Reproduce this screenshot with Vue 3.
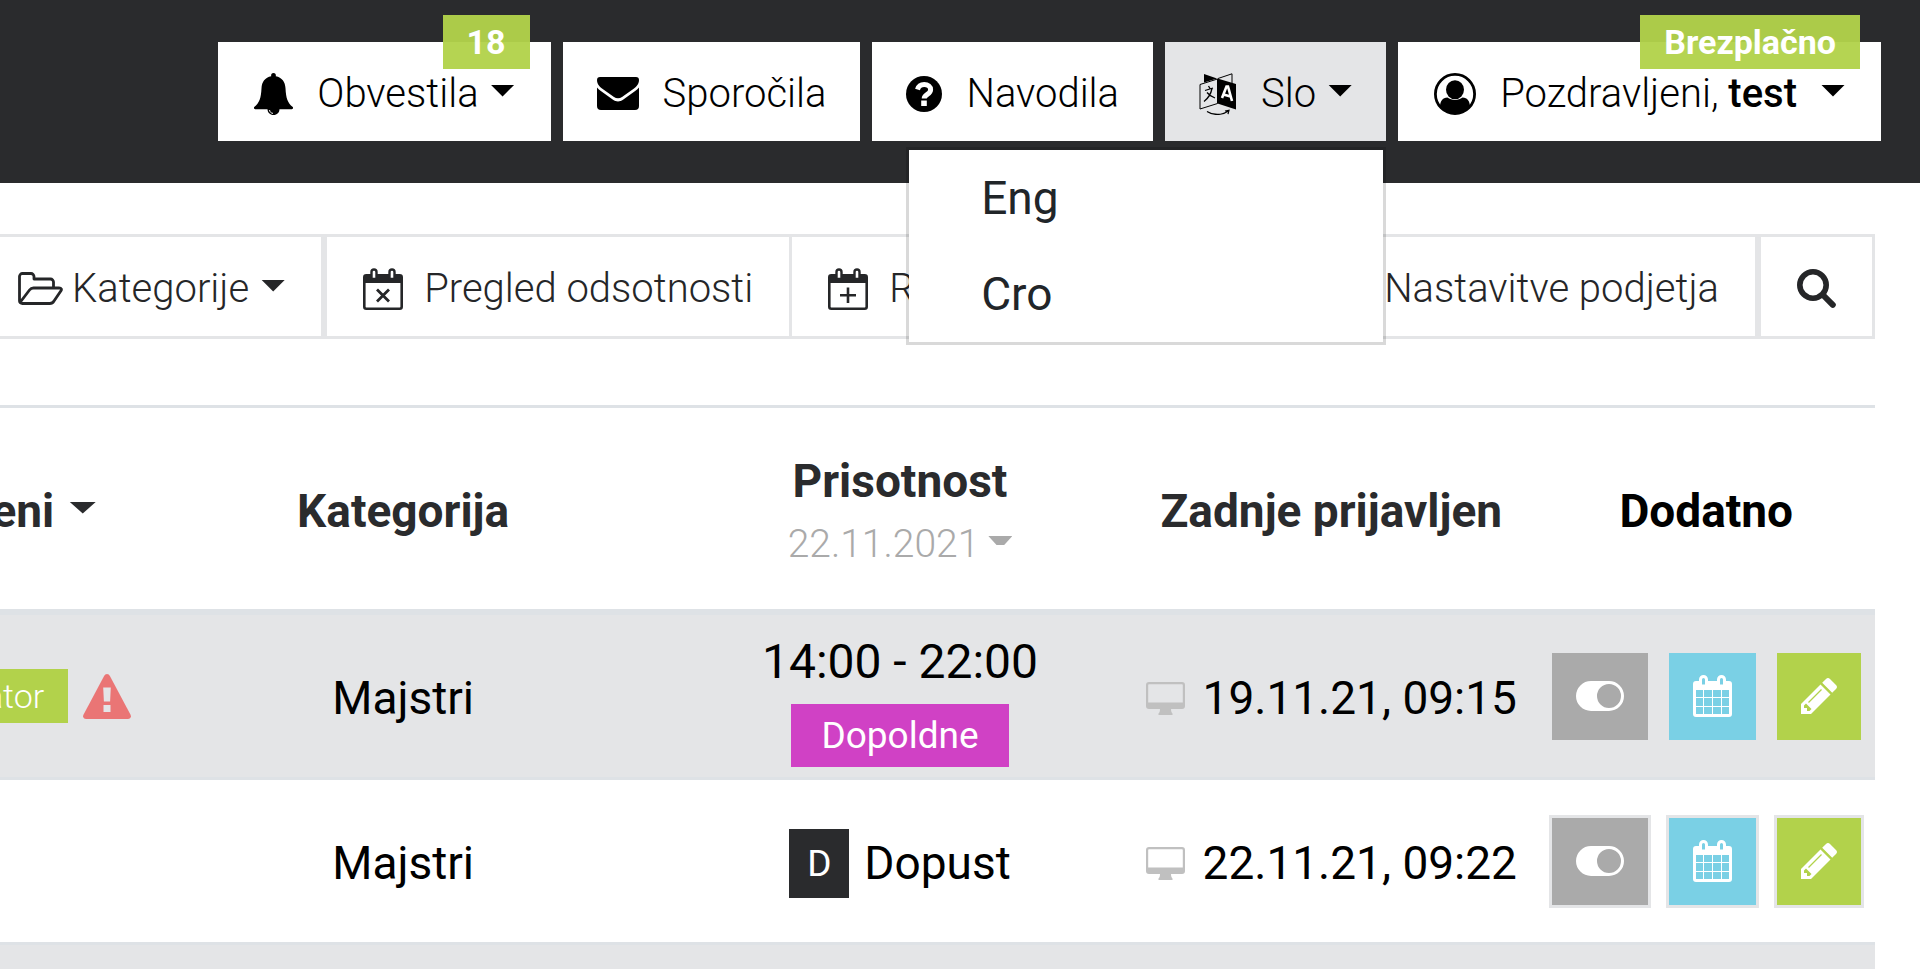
<script setup>
const rows = [
  { id: 1, category: 'Majstri', time: '14:00 - 22:00', shift: 'Dopoldne', login: '19.11.21, 09:15', admin: true },
  { id: 2, category: 'Majstri', leave: 'Dopust', code: 'D', login: '22.11.21, 09:22' },
  { id: 3 },
]
const languages = ['Eng', 'Cro']
</script>

<template>
  <div class="page">
    <header class="topbar">
      <button class="top-btn wide" type="button">
        <svg class="icon bell" viewBox="0 0 39 42" width="39" height="42" aria-hidden="true">
          <path d="M19.500 0c2 0 2.600 1.400 2.300 3.200 6.200 1.200 9.400 5.600 9.700 12 .5 10 2 14.500 7.300 18.800.8 1-.2 2.200-1.600 2.200H1.800C.4 36.200-.6 35 .2 34c5.300-4.300 6.800-8.800 7.300-18.800.3-6.400 3.500-10.800 9.700-12C16.900 1.400 17.500 0 19.500 0z" />
          <path d="M13.500 36h12c0 3.500-2.500 6-6 6s-6-2.500-6-6z" />
          <path d="M15.500 37c.3 2 1.600 3.200 3.500 3.400" fill="none" stroke="#fff" stroke-width="1" />
        </svg>
        <span>Obvestila</span>
        <i class="caret"></i>
        <span class="tag count">18</span>
      </button>
      <button class="top-btn" type="button">
        <svg class="icon" viewBox="0 0 42 33" width="42" height="33" aria-hidden="true">
          <path d="M3 0h36a3 3 0 0 1 3 3c0 4-2.500 6.600-5 8.400L25 20c-2.400 1.800-5.600 1.800-8 0L5 11.400C2.500 9.600 0 7 0 3a3 3 0 0 1 3-3z" />
          <path d="M0 10.500c1 1.300 2.200 2.300 3.500 3.300L16 22.800c3 2.200 7 2.200 10 0l12.500-9c1.300-1 2.500-2 3.500-3.300V29a4 4 0 0 1-4 4H4a4 4 0 0 1-4-4z" />
        </svg>
        <span>Sporočila</span>
      </button>
      <button class="top-btn" type="button">
        <svg class="icon" viewBox="0 0 36 36" width="36" height="36" aria-hidden="true">
          <circle cx="18" cy="18" r="18" />
          <path d="M11.500 13.500c1-3.500 3.500-5 6.700-5 3.800 0 6.400 2.100 6.400 5.200 0 4.800-6.400 4.400-6.400 8.800" fill="none" stroke="#fff" stroke-width="5" />
          <path d="M15.200 24.500h5.600V30h-5.600z" fill="#fff" />
        </svg>
        <span>Navodila</span>
      </button>
      <div class="language">
        <button class="top-btn active" type="button" aria-haspopup="true" aria-expanded="true">
          <svg class="icon" viewBox="0 0 38 42" width="38" height="42" aria-hidden="true">
            <path d="M5 1v8.500L18 5.500zM18.500 5.500L37 11v25.500l-18.500-6z" />
            <path d="M1 11.500L18.500 6v24.500L1 36zM19 5.500L33 .8V10" fill="none" stroke="#000" stroke-width="1" />
            <path d="M6 17.500l8-2.500M9.500 13l1.500 2.500M13 15.500c-1 5-4 10-8 13M8 19.500c2 2.500 5 4.500 8 5.500" fill="none" stroke="#000" stroke-width="1.300" />
            <path d="M23 25l4.500-11.500h1.500L33 28M24.500 21.500l7 2" fill="none" stroke="#fff" stroke-width="2.600" />
            <path d="M8 38.500c6 4 15 4 21-.3M26 38l4-.8-1 4" fill="none" stroke="#000" stroke-width="1.200" />
          </svg>
          <span>Slo</span>
          <i class="caret"></i>
        </button>
        <ul class="menu">
          <li v-for="name in languages" :key="name"><a href="#">{{ name }}</a></li>
        </ul>
      </div>
      <button class="top-btn wide" type="button">
        <svg class="icon" viewBox="0 0 42 42" width="42" height="42" aria-hidden="true">
          <circle cx="21" cy="21" r="19.600" fill="none" stroke="#000" stroke-width="2.800" />
          <ellipse cx="21" cy="16.800" rx="9" ry="9.500" />
          <path d="M6 34c0-5.500 2.500-9.500 7.500-9.500 4 3.300 11 3.300 15 0 5 0 7.500 4 7.500 9.500-4 4.700-9 7-15 7S10 38.700 6 34z" />
        </svg>
        <span>Pozdravljeni, <b>test</b></span>
        <i class="caret spaced"></i>
        <span class="tag plan">Brezplačno</span>
      </button>
    </header>

    <main class="content">
      <nav class="toolbar">
        <a class="tool first" href="#">
          <svg viewBox="0 0 45 33" width="45" height="33" aria-hidden="true">
            <path d="M1.500 29V4.500a3 3 0 0 1 3-3H13a3 3 0 0 1 3 3V7h16.500a3 3 0 0 1 3 3v6M2 30.500l9.500-12.500c1-1.300 2.300-2 4-2H41c2.500 0 3 1.200 1.800 3L36 29c-1 1.700-2.400 2.500-4.200 2.500H4.500C2.500 31.500 1.500 30.500 1.500 29" fill="none" stroke="currentColor" stroke-width="2.800" stroke-linejoin="round" />
          </svg>
          <span>Kategorije</span>
          <i class="caret"></i>
        </a>
        <a class="tool thick" href="#">
          <svg viewBox="0 0 40 42" width="40" height="42" aria-hidden="true">
            <rect x="1.300" y="7.300" width="37.400" height="33.400" rx="2" fill="none" stroke="currentColor" stroke-width="2.600" />
            <path d="M1 7h38v8H1z" />
            <path d="M8.500 11V4a2.500 2.500 0 0 1 5 0v7zM26.500 11V4a2.500 2.500 0 0 1 5 0v7z" fill="#fff" stroke="currentColor" stroke-width="2.400" />
            <path d="M14 21.500l12 12m0-12l-12 12" stroke="currentColor" stroke-width="2.800" />
          </svg>
          <span>Pregled odsotnosti</span>
        </a>
        <a class="tool grow" href="#">
          <svg viewBox="0 0 40 42" width="40" height="42" aria-hidden="true">
            <rect x="1.300" y="7.300" width="37.400" height="33.400" rx="2" fill="none" stroke="currentColor" stroke-width="2.600" />
            <path d="M1 7h38v8H1z" />
            <path d="M8.500 11V4a2.500 2.500 0 0 1 5 0v7zM26.500 11V4a2.500 2.500 0 0 1 5 0v7z" fill="#fff" stroke="currentColor" stroke-width="2.400" />
            <path d="M20 19.500v15.500M12 27.200h16" stroke="currentColor" stroke-width="2.600" />
          </svg>
          <span>R</span>
        </a>
        <a class="tool settings" href="#"><span>Nastavitve podjetja</span></a>
        <button class="tool search" type="button" aria-label="Išči">
          <svg viewBox="0 0 39 39" width="39" height="39" aria-hidden="true">
            <circle cx="16" cy="16" r="13.200" fill="none" stroke="currentColor" stroke-width="5.600" />
            <path d="M26 26l9.800 9.800" stroke="currentColor" stroke-width="6" stroke-linecap="round" />
          </svg>
        </button>
      </nav>

      <table class="staff">
        <colgroup>
          <col class="c1"><col class="c2"><col class="c3"><col class="c4"><col class="c5">
        </colgroup>
        <thead>
          <tr>
            <th><div class="name-head"><span>eni</span><i class="caret big"></i></div></th>
            <th>Kategorija</th>
            <th>
              <div>Prisotnost</div>
              <div class="date"><span>22.11.2021</span><i class="caret cut"></i></div>
            </th>
            <th>Zadnje prijavljen</th>
            <th class="black">Dodatno</th>
          </tr>
        </thead>
        <tbody>
          <tr v-for="row in rows" :key="row.id">
            <td>
              <div v-if="row.admin" class="name-cell">
                <span class="role">ator</span>
                <svg viewBox="0 0 48 45" width="48" height="45" aria-hidden="true">
                  <path d="M24 0c1.300 0 2.200.7 2.900 2l20.500 38.500c1.300 2.500 0 4.500-2.600 4.500H3.200C.6 45-.7 43 .6 40.500L21.100 2C21.800.7 22.700 0 24 0z" fill="#ea7575" />
                  <path d="M20.200 13.500h7.600l-.7 14h-6.200zM20.500 31h7v7h-7z" fill="#e4e5e7" />
                </svg>
              </div>
            </td>
            <td>{{ row.category }}</td>
            <td>
              <template v-if="row.time">
                <div class="time">{{ row.time }}</div>
                <span class="shift">{{ row.shift }}</span>
              </template>
              <div v-else-if="row.leave" class="leave"><span class="code">{{ row.code }}</span><span>{{ row.leave }}</span></div>
            </td>
            <td>
              <div v-if="row.login" class="login">
                <svg viewBox="0 0 39 33" width="39" height="33" aria-hidden="true">
                  <path fill-rule="evenodd" d="M3 0h33a3 3 0 0 1 3 3v21a3 3 0 0 1-3 3H25c0 2 .5 3.500 1.500 4.500V33h-14v-1.500c1-1 1.500-2.500 1.500-4.500H3a3 3 0 0 1-3-3V3a3 3 0 0 1 3-3zm0 2.200a.8.8 0 0 0-.8.8v17.500h34.600V3a.8.8 0 0 0-.8-.8z" fill="#c0c0c0" />
                </svg>
                <span>{{ row.login }}</span>
              </div>
            </td>
            <td>
              <div v-if="row.login" class="actions">
                <button class="act toggle" type="button" aria-label="Status">
                  <svg viewBox="0 0 48 30" width="48" height="30" aria-hidden="true">
                    <path fill-rule="evenodd" d="M15 0h18a15 15 0 0 1 0 30H15a15 15 0 0 1 0-30zm18 3a12 12 0 1 0 0 24 12 12 0 0 0 0-24z" />
                  </svg>
                </button>
                <button class="act cal" type="button" aria-label="Koledar">
                  <svg viewBox="0 0 39 42" width="39" height="42" aria-hidden="true">
                    <path fill-rule="evenodd" d="M3 6h33a3 3 0 0 1 3 3v30a3 3 0 0 1-3 3H3a3 3 0 0 1-3-3V9a3 3 0 0 1 3-3zm0 9v7h7v-7zm8 0v7h8v-7zm9 0v7h8v-7zm9 0v7h7v-7zM3 23v8h7v-8zm8 0v8h8v-8zm9 0v8h8v-8zm9 0v8h7v-8zM3 32v7h7v-7zm8 0v7h8v-7zm9 0v7h8v-7zm9 0v7h7v-7z" />
                    <path d="M7.500 11V4.500a3 3 0 0 1 6 0V11zM25.500 11V4.500a3 3 0 0 1 6 0V11z" fill="#7ad0e5" stroke="#fff" stroke-width="3" />
                  </svg>
                </button>
                <button class="act edit" type="button" aria-label="Uredi">
                  <svg viewBox="0 0 36 36" width="36" height="36" aria-hidden="true">
                    <path fill-rule="evenodd" d="M19.500 6.500l10 10L10 36H0V26zM3 27.500V30h3v3h2.500l2-2-5.500-5.500z" />
                    <path d="M21.200 4.800L25 1c1.300-1.300 2.700-1.300 4 0l6 6c1.300 1.300 1.300 2.700 0 4l-3.800 3.800z" />
                    <path d="M7.500 24.500L20.500 11.500" stroke="#b2d24b" stroke-width="1.200" />
                  </svg>
                </button>
              </div>
            </td>
          </tr>
        </tbody>
      </table>
    </main>
  </div>
</template>

<style>
body {
  margin: 0;
  overflow: hidden;
  background: #fff;
}
</style>

<style scoped>
.page {
  font-family: Roboto, "Noto Sans", sans-serif;
  font-size: 46px;
  color: #000;
  height: 100vh;
  overflow: hidden;
}
button {
  font: inherit;
  color: inherit;
  border: 0;
  cursor: pointer;
}
a {
  color: inherit;
  text-decoration: none;
}
svg {
  display: block;
  flex: none;
  fill: currentColor;
}
.topbar {
  display: flex;
  justify-content: flex-end;
  gap: 12px;
  padding: 42px 39px;
  background: #2a2b2d;
}
.top-btn {
  position: relative;
  display: flex;
  align-items: center;
  height: 99px;
  padding: 4px 34px 0;
  background: #fff;
  font-size: 40px;
  font-weight: 300;
  white-space: nowrap;
}
.top-btn.wide {
  padding: 4px 36px 0;
}
.top-btn b {
  font-weight: 500;
}
.top-btn .icon {
  margin-right: 24px;
}
.top-btn.active {
  background: #e4e5e7;
}
.caret {
  flex: none;
  width: 24px;
  height: 12px;
  margin: 0 0 6px 12px;
  background: currentColor;
  clip-path: polygon(0 0, 100% 0, 50% 100%);
}
.caret.spaced {
  margin-left: 24px;
}
.tag {
  position: absolute;
  top: -27px;
  right: 21px;
  height: 54px;
  padding: 0 24px;
  background: rgba(178, 210, 75, 0.96);
  color: #fff;
  font-size: 34px;
  font-weight: 700;
  line-height: 54px;
}
.language {
  position: relative;
}
.menu {
  position: absolute;
  z-index: 2;
  top: 105px;
  right: 0;
  width: 474px;
  margin: 0;
  padding: 0;
  border: 3px solid rgba(0, 0, 0, 0.15);
  background: #fff;
  background-clip: padding-box;
  list-style: none;
}
.menu a {
  display: block;
  padding: 0 72px;
  color: #212529;
  line-height: 96px;
}
.content {
  margin-right: 45px;
  padding-top: 51px;
}
.toolbar {
  display: flex;
  border: 3px solid #e4e5e7;
  border-left: 0;
  color: #252628;
  font-size: 40px;
  font-weight: 300;
}
.tool {
  box-sizing: border-box;
  display: flex;
  align-items: center;
  height: 99px;
  padding: 4px 36px 0;
  border-left: 3px solid #e4e5e7;
  background: #fff;
  white-space: nowrap;
}
.tool svg {
  margin-right: 21px;
}
.tool.first {
  padding-left: 18px;
  border-left: 0;
}
.tool.first svg {
  margin-right: 9px;
}
.tool.thick,
.tool.search {
  border-left-width: 6px;
}
.tool.grow {
  flex: 1;
}
.tool.settings {
  border-left: 0;
}
.tool.search svg {
  margin: 0;
}
.staff {
  width: 100%;
  margin-top: 66px;
  border-spacing: 0;
  table-layout: fixed;
  text-align: center;
}
.c1 { width: 7%; }
.c2 { width: 29%; }
.c3 { width: 24%; }
.c4 { width: 22%; }
.c5 { width: 18%; }
th,
td {
  box-sizing: border-box;
  padding: 4px 0 0;
  white-space: nowrap;
}
th {
  height: 210px;
  border-top: 3px solid #dee2e6;
  border-bottom: 6px solid #dee2e6;
  color: #2a2b2d;
  font-weight: 700;
  line-height: 66px;
}
th.black {
  color: #000;
}
td {
  height: 165px;
  border-bottom: 3px solid #dee2e6;
  line-height: 66px;
}
td:first-child,
td:last-child {
  padding-top: 0;
}
tbody tr:nth-child(odd) {
  background: #e4e5e7;
}
.name-head,
.name-cell {
  display: flex;
  align-items: center;
  justify-content: flex-end;
}
.name-head {
  padding-right: 35px;
}
.name-head .caret {
  width: 27px;
  margin-left: 15px;
}
.role {
  margin-right: 15px;
  padding: 0 24px;
  background: #b2d24b;
  color: #fff;
  font-size: 34px;
  font-weight: 300;
  line-height: 54px;
}
.date {
  display: flex;
  align-items: center;
  justify-content: center;
  color: #aaa;
  font-size: 39px;
  font-weight: 300;
  line-height: 60px;
}
.date .caret {
  height: 9px;
  margin-left: 9px;
  clip-path: polygon(0 0, 100% 0, 66% 100%, 34% 100%);
}
.time {
  font-size: 48px;
}
.shift {
  display: block;
  width: max-content;
  margin: 9px auto 0;
  padding: 0 30px;
  background: #d041c5;
  color: #fff;
  font-size: 37px;
  line-height: 63px;
}
.leave,
.login,
.actions {
  display: flex;
  align-items: center;
  justify-content: center;
}
.code {
  width: 60px;
  margin-right: 15px;
  background: #2a2b2d;
  color: #fff;
  font-size: 37px;
  line-height: 69px;
}
.login svg {
  margin-right: 18px;
}
.actions {
  gap: 15px;
}
.act {
  padding: 0 24px;
  height: 93px;
  border: 3px solid #e4e5e7;
  color: #fff;
}
.toggle {
  background: #aaa;
}
.cal {
  background: #7ad0e5;
}
.edit {
  background: #b2d24b;
}
</style>
